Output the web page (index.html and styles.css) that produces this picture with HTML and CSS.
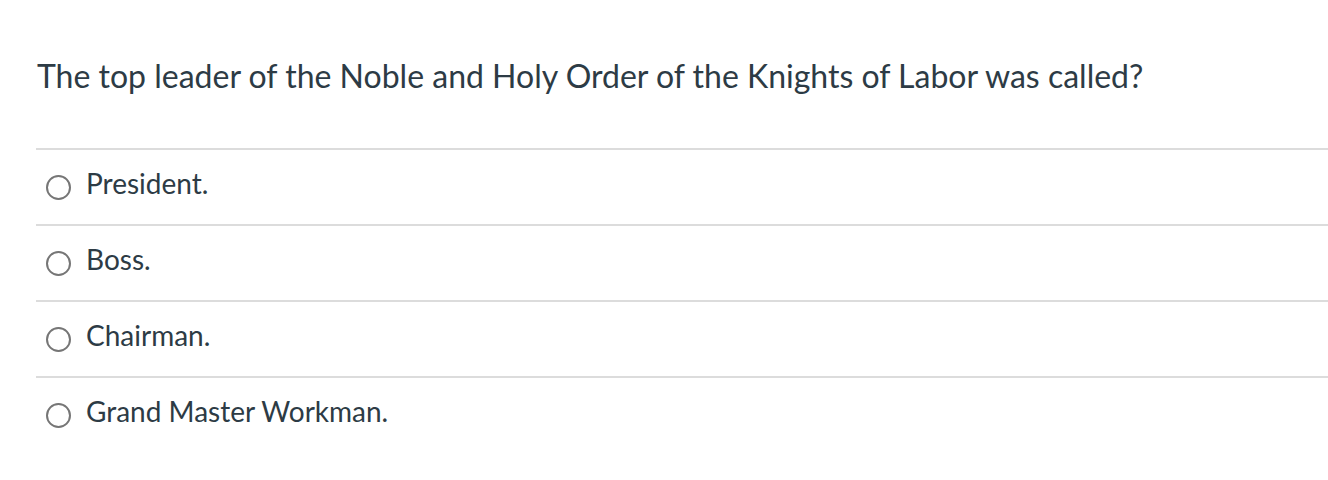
FILE: index.html
```html
<!DOCTYPE html>
<html>
<head>
<meta charset="utf-8">
<link rel="stylesheet" href="styles.css">
</head>
<body>
<div class="quiz">
  <p class="question">The top leader of the Noble and Holy Order of the Knights of Labor was called?</p>
  <div class="answers">
    <label class="answer"><span class="radio"></span><span class="text">President.</span></label>
    <label class="answer"><span class="radio"></span><span class="text">Boss.</span></label>
    <label class="answer"><span class="radio"></span><span class="text">Chairman.</span></label>
    <label class="answer"><span class="radio"></span><span class="text">Grand Master Workman.</span></label>
  </div>
</div>
</body>
</html>
```
FILE: styles.css
```css
html, body {
  margin: 0;
  padding: 0;
  background: #ffffff;
}
body {
  font-family: Lato, "Liberation Sans", sans-serif;
  color: #2d3b45;
}
.quiz {
  padding: 50px 0 0 36px;
}
.question {
  margin: 0 0 0 1px;
  font-size: 32px;
  line-height: 52px;
  height: 98px;
}
.answers {
  display: flex;
  flex-direction: column;
}
.answer {
  display: flex;
  align-items: center;
  height: 74px;
  border-top: 2px solid #dcdcdc;
  padding-left: 10px;
}
.radio {
  width: 21px;
  height: 21px;
  border: 2px solid #767676;
  border-radius: 50%;
  flex: none;
  margin-right: 15px;
}
.text {
  font-size: 28px;
  line-height: 30px;
  margin-bottom: 8px;
}
```
